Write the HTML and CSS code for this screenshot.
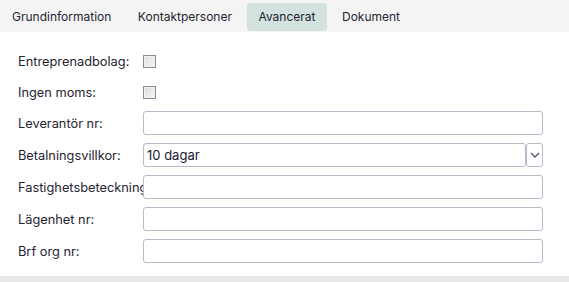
FILE: index.html
```html
<!DOCTYPE html>
<html lang="sv">

<head>
    <meta charset="UTF-8">
    <meta name="viewport" content="width=device-width, initial-scale=1.0">
    <title>Leverantör - Avancerat</title>
    <link rel="stylesheet" href="styles.css">
</head>

<body>

    <div class="tabs">
        <div class="tab">Grundinformation</div>
        <div class="tab">Kontaktpersoner</div>
        <div class="tab active">Avancerat</div>
        <div class="tab">Dokument</div>
    </div>

    <div class="panel">
        <div class="form-row check-row">
            <label for="entreprenad">Entreprenadbolag:</label>
            <input type="checkbox" id="entreprenad">
        </div>
        <div class="form-row check-row">
            <label for="moms">Ingen moms:</label>
            <input type="checkbox" id="moms">
        </div>
        <div class="form-row">
            <label for="levnr">Leverantör nr:</label>
            <input type="text" id="levnr">
        </div>
        <div class="form-row">
            <label for="villkor">Betalningsvillkor:</label>
            <div class="select-wrap">
                <div class="select-value" id="villkor">10 dagar</div>
                <div class="select-btn">
                    <svg width="10" height="6" viewBox="0 0 10 6">
                        <path d="M1 1 L5 5 L9 1" fill="none" stroke="#4a5468" stroke-width="1.3" />
                    </svg>
                </div>
            </div>
        </div>
        <div class="form-row">
            <label for="fastighet">Fastighetsbeteckning:</label>
            <input type="text" id="fastighet">
        </div>
        <div class="form-row">
            <label for="lgh">Lägenhet nr:</label>
            <input type="text" id="lgh">
        </div>
        <div class="form-row">
            <label for="brf">Brf org nr:</label>
            <input type="text" id="brf">
        </div>
    </div>

</body>

</html>
```

FILE: styles.css
```css
body {
    margin: 0;
    font-family: Inter, "Noto Sans", sans-serif;
    font-size: 12px;
    color: #1f2430;
    background-color: #e8e8e8;
}

.tabs {
    display: flex;
    gap: 3.5px;
    height: 32px;
    padding: 3px 0 1px 0.5px;
    box-sizing: border-box;
    background-color: #f4f4f4;
}

.tab {
    padding: 0 11.5px;
    line-height: 28px;
    border-radius: 4px;
    font-size: 12px;
    color: #1f2430;
}

.tab.active {
    background-color: #d3e2df;
}

.panel {
    background-color: #fff;
    height: 244px;
    padding: 17px 26px 0 18px;
    box-sizing: border-box;
}

.form-row {
    display: flex;
    align-items: center;
    height: 24px;
    margin-bottom: 8px;
}

.check-row {
    margin-bottom: 7px;
}

.form-row label {
    width: 125px;
    flex: none;
    white-space: nowrap;
    overflow: hidden;
    font-size: 12.8px;
}

.form-row input[type="text"] {
    flex: 1;
    height: 24px;
    margin: 0;
    padding: 0 4px;
    box-sizing: border-box;
    border: 1px solid #b9b9c9;
    border-radius: 3px;
    font: inherit;
}

.form-row input[type="checkbox"] {
    width: 13px;
    height: 13px;
    margin: 0;
    appearance: none;
    border: 1px solid #8c8c8c;
    background: linear-gradient(135deg, #dcdcdc, #f8f8f8);
    box-shadow: inset 0 0 0 1px #f0f0f0;
}

.select-wrap {
    flex: 1;
    display: flex;
    height: 24px;
}

.select-value {
    flex: 1;
    border: 1px solid #b9b9c9;
    border-radius: 3px;
    padding: 0 4px 0 3px;
    line-height: 22px;
    font-size: 13px;
    color: #1a2030;
}

.select-btn {
    width: 17px;
    border: 1px solid #b9b9c9;
    border-radius: 3px;
    box-sizing: border-box;
    display: flex;
    align-items: center;
    justify-content: center;
}
```
